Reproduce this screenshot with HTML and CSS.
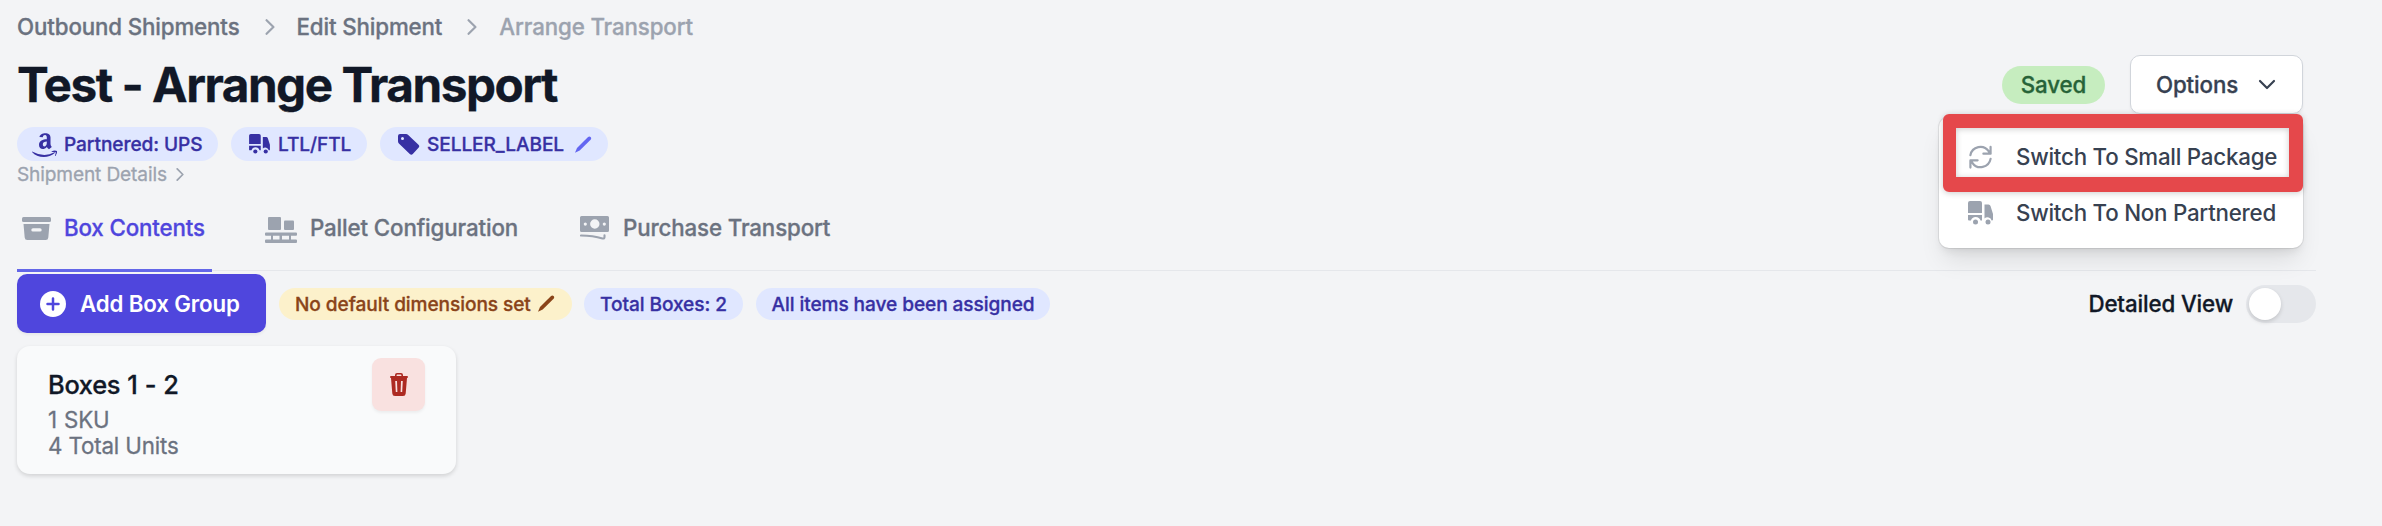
FILE: index.html
```html
<!DOCTYPE html>
<html lang="en">
<head>
    <meta charset="UTF-8">
    <meta name="viewport" content="width=device-width, initial-scale=1.0">
    <title>Arrange Transport</title>
    <link rel="stylesheet" href="styles.css">
</head>
<body>
    <!-- shared icons -->
    <svg class="icon-defs" aria-hidden="true">
        <symbol id="icon-truck" viewBox="0 0 25 24">
            <path d="M2 0h10a2 2 0 0 1 2 2v10H0V2a2 2 0 0 1 2-2z"/>
            <path d="M0 14h14v5.500h-1.500a5 5 0 0 0-9.600 0H1a1 1 0 0 1-1-1z"/>
            <path d="M16.500 3.500h4q1.500 0 2 1.500L25 13v5.500q0 1-1 1h-.4a4.200 4.200 0 0 0-7.100-2z"/>
            <circle cx="7.500" cy="21" r="2.500"/>
            <circle cx="20" cy="21" r="2.500"/>
        </symbol>
        <symbol id="icon-chevron" viewBox="0 0 8 14">
            <path d="M1 1l6 6-6 6" fill="none" stroke="currentColor" stroke-width="1.900" stroke-linecap="round" stroke-linejoin="round"/>
        </symbol>
    </svg>

    <nav class="breadcrumbs">
        <a>Outbound Shipments</a>
        <svg class="crumb-arrow"><use href="#icon-chevron"/></svg>
        <a>Edit Shipment</a>
        <svg class="crumb-arrow"><use href="#icon-chevron"/></svg>
        <a class="current">Arrange Transport</a>
    </nav>

    <header class="header">
        <h1>Test - Arrange Transport</h1>
        <div class="header-actions">
            <span class="saved-badge">Saved</span>
            <div class="dropdown">
                <button class="btn btn-options">
                    <span>Options</span>
                    <svg width="18" height="11" viewBox="0 0 18 11"><path d="M2 2l7 7 7-7" fill="none" stroke="currentColor" stroke-width="2.200" stroke-linecap="round" stroke-linejoin="round"/></svg>
                </button>
                <div class="menu">
                    <a class="menu-item">
                        <svg class="menu-icon" viewBox="0 0 25 25"><path d="M2 10.500A10.500 10.500 0 0 1 21 6.500L23 9M23 2v7h-7.500M23 14.500A10.500 10.500 0 0 1 4 18.500L2 16M2 23.500V16h7.500" fill="none" stroke="currentColor" stroke-width="2.300" stroke-linecap="round" stroke-linejoin="round"/></svg>
                        <span>Switch To Small Package</span>
                    </a>
                    <a class="menu-item">
                        <svg class="menu-icon"><use href="#icon-truck"/></svg>
                        <span>Switch To Non Partnered</span>
                    </a>
                </div>
                <div class="highlight"></div>
            </div>
        </div>
    </header>

    <div class="badges">
        <span class="badge badge-amazon">
            <svg width="26" height="28" viewBox="0 0 26 28">
                <path d="M7.500 7C8 2.500 18.500 1.500 18.500 7.500V14q0 1.500 1.300 3L17 19.300q-1.400-1-2.200-2.300C12 20.300 7 19.500 7 15c0-4.500 4-5.500 7.800-5.700C15 6 14.500 5 13 5c-1.300 0-1.900.8-2.200 2.300zM14.800 11.500c-2.300 0-4 .7-4 3 0 3 4 2.500 4-1.500z" fill-rule="evenodd"/>
                <path d="M0 21.500q12 6.500 22.500.8.800 0 .3.800C16 29 5 28 0 22z"/>
                <path d="M19.500 21.500q3-1.500 5.500-.5.600 2-1.500 5-.7.300-.5-.5.700-2 .8-3.200-1.500-.4-4.100-.2z"/>
            </svg>
            Partnered: UPS
        </span>
        <span class="badge badge-freight">
            <svg width="21" height="20"><use href="#icon-truck"/></svg>
            LTL/FTL
        </span>
        <span class="badge badge-label">
            <svg width="22" height="21" viewBox="0 0 22 21"><path d="M2 0h6q1.300 0 2.200.9l10.300 9.800q1.500 1.500 0 3l-5.700 6.200q-1.500 1.500-3 0L.9 9.500Q0 8.600 0 7.300V2q0-2 2-2zM4.500 3a1.500 1.500 0 1 0 0 3 1.500 1.500 0 0 0 0-3z" fill-rule="evenodd"/></svg>
            SELLER_LABEL
            <svg class="label-edit" width="17" height="17" viewBox="0 0 17 17"><path d="M12.800 1.200q1.600-1.400 2.800-.2 1.200 1.300 0 2.700L4.700 14.600 0 16.700 2 12z"/></svg>
        </span>
    </div>

    <a class="details-link">
        Shipment Details
        <svg width="8" height="13"><use href="#icon-chevron"/></svg>
    </a>

    <div class="tabs">
        <a class="tab active">
            <svg width="29" height="23" viewBox="0 0 29 23"><rect width="29" height="5" rx="1.500"/><path d="M1.500 7h26l-1.200 13.500q-.2 2.500-2.600 2.500H5.300q-2.400 0-2.600-2.500zM11 11.200a1.700 1.700 0 0 0 0 3.400h7a1.700 1.700 0 0 0 0-3.400z" fill-rule="evenodd"/></svg>
            <span>Box Contents</span>
        </a>
        <a class="tab tab-pallet">
            <svg class="pallet-icon" width="32" height="26" viewBox="0 0 32 26"><rect x="3" width="13" height="13" rx="1"/><rect x="19" y="3.500" width="10" height="9.500" rx="1"/><path d="M1 15.500h30q1 0 1 1V18q0 .8-1 .8h-5v3.700h5q1 0 1 1V25q0 1-1 1H1q-1 0-1-1v-1.500q0-1 1-1h5v-3.700H1q-1 0-1-.8v-1.500q0-1 1-1zM8 18.800v3.700h6.500v-3.700zm9 0v3.700h7v-3.700z" fill-rule="evenodd"/></svg>
            <span>Pallet Configuration</span>
        </a>
        <a class="tab">
            <svg width="29" height="24" viewBox="0 0 29 24"><path d="M1.500 0h26Q29 0 29 1.500v13q0 1.500-1.500 1.500h-26Q0 16 0 14.500v-13Q0 0 1.500 0zM14.800 3.300a4.700 4.700 0 1 0 0 9.400 4.700 4.700 0 0 0 0-9.400zM5.300 6.500a1.600 1.600 0 1 0 0 3.200 1.600 1.600 0 0 0 0-3.200zM24.300 6.500a1.600 1.600 0 1 0 0 3.200 1.600 1.600 0 0 0 0-3.200z" fill-rule="evenodd"/><path d="M1 19.500q12 0 21.500 3 2 .4 2-1.500v-1.700" fill="none" stroke="currentColor" stroke-width="2.100" stroke-linecap="round"/></svg>
            <span>Purchase Transport</span>
        </a>
    </div>

    <div class="toolbar">
        <button class="btn btn-primary">
            <svg width="26" height="26" viewBox="0 0 26 26"><circle cx="13" cy="13" r="13"/><path class="plus" d="M13 7.500v11M7.500 13h11"/></svg>
            <span>Add Box Group</span>
        </button>
        <span class="badge badge-warning">
            No default dimensions set
            <svg width="17" height="17" viewBox="0 0 17 17"><path d="M12.800 1.200q1.600-1.400 2.800-.2 1.200 1.300 0 2.700L4.700 14.600 0 16.700 2 12z"/></svg>
        </span>
        <span class="badge badge-total">Total Boxes: 2</span>
        <span class="badge badge-assigned">All items have been assigned</span>
        <div class="view-toggle">
            <span>Detailed View</span>
            <span class="switch"><span class="knob"></span></span>
        </div>
    </div>

    <div class="box-card">
        <div class="box-info">
            <h3>Boxes 1 - 2</h3>
            <p>1 SKU</p>
            <p>4 Total Units</p>
        </div>
        <button class="btn-delete">
            <svg width="18" height="23" viewBox="0 0 18 23"><path d="M5 3V2q0-2 2-2h4q2 0 2 2v1h4q1 0 1 1t-1 1l-1.300 15.500q-.2 2.500-2.700 2.500H5q-2.500 0-2.700-2.500L1 5Q0 5 0 4t1-1zM6.600 3h4.800V2.200q0-.7-.7-.7H7.300q-.7 0-.7.700zM5.200 8l.6 11h1.600L7 8zM11 8l-.4 11h1.600l.6-11z" fill-rule="evenodd"/></svg>
        </button>
    </div>
</body>
</html>
```
FILE: styles.css
```css
:root {
    --indigo: #4f46dd;
    --indigo-dark: #3730a3;
    --indigo-light: #e0e7ff;
    --gray-400: #9ca3af;
    --gray-500: #6b7280;
    --gray-700: #374151;
    --gray-900: #111827;
}

* {
    margin: 0;
    padding: 0;
    box-sizing: border-box;
}

body {
    background-color: #f3f4f6;
    color: var(--gray-900);
    font-family: Inter, "Liberation Sans", sans-serif;
    font-size: 22.3px;
    font-weight: 500;
    line-height: 32px;
    letter-spacing: -0.13px;
    -webkit-text-stroke: 0.3px currentColor;
    padding: 11px 66px 0 17px;
    height: 526px;
    overflow: hidden;
}

svg {
    fill: currentColor;
    flex-shrink: 0;
}

button {
    font: inherit;
    letter-spacing: inherit;
    border: none;
}

.icon-defs {
    display: none;
}

.breadcrumbs {
    display: flex;
    align-items: center;
    height: 32px;
    color: var(--gray-500);
}

.breadcrumbs .current {
    color: var(--gray-400);
}

.crumb-arrow {
    width: 10px;
    height: 16px;
    margin: 0 22px 0 25px;
    color: var(--gray-400);
}

.header {
    display: flex;
    align-items: center;
    justify-content: space-between;
    height: 59px;
    margin-top: 12px;
    padding-right: 13px;
}

.header h1 {
    padding-top: 1px;
    font-size: 47.7px;
    line-height: 58px;
    font-weight: 700;
    letter-spacing: -1.5px;
}

.header-actions {
    display: flex;
    align-items: center;
    gap: 25px;
}

.saved-badge {
    width: 103px;
    height: 38px;
    line-height: 38px;
    border-radius: 19px;
    background: #c6edbf;
    color: #276338;
    text-align: center;
}

.dropdown {
    position: relative;
}

.btn {
    display: flex;
    align-items: center;
    border-radius: 10px;
    box-shadow: 0 2px 3px rgba(0, 0, 0, 0.05);
}

.btn-options {
    gap: 20px;
    width: 173px;
    height: 59px;
    padding-left: 25px;
    border: 1px solid #d1d5db;
    background: white;
    color: var(--gray-700);
}

.menu {
    position: absolute;
    right: 0;
    top: 62px;
    width: 364px;
    height: 131px;
    padding: 12px 0;
    border-radius: 10px;
    background: white;
    box-shadow: 0 0 0 1px rgba(0, 0, 0, 0.07), 0 16px 24px -5px rgba(0, 0, 0, 0.1), 0 6px 10px -4px rgba(0, 0, 0, 0.1);
}

.menu-item {
    display: flex;
    align-items: center;
    gap: 23px;
    height: 56px;
    padding-left: 29px;
    color: var(--gray-700);
    letter-spacing: -0.22px;
    -webkit-text-stroke-width: 0;
    white-space: nowrap;
}

.menu-icon {
    width: 25px;
    height: 24px;
    color: var(--gray-400);
}

.highlight {
    position: absolute;
    right: 0;
    top: 59px;
    width: 360px;
    height: 78px;
    border: solid #e5484b;
    border-width: 14px 14px 15px 13px;
    border-radius: 6px;
    box-shadow: 0 1px 6px rgba(0, 0, 0, 0.2), inset 0 1px 6px rgba(0, 0, 0, 0.2);
}

.badges {
    display: flex;
    gap: 13px;
    margin-top: 13px;
}

.badge {
    display: flex;
    align-items: center;
    height: 34px;
    border-radius: 17px;
    background: var(--indigo-light);
    color: var(--indigo-dark);
    font-size: 19.1px;
    letter-spacing: -0.08px;
    white-space: nowrap;
}

.badge-amazon {
    gap: 6px;
    width: 201px;
    padding-left: 15px;
}

.badge-freight {
    gap: 8px;
    width: 136px;
    padding-left: 18px;
}

.badge-label {
    gap: 7px;
    width: 228px;
    padding-left: 18px;
}

.label-edit {
    margin-left: 4px;
    color: #6366f1;
}

.details-link {
    display: flex;
    align-items: center;
    gap: 9px;
    height: 26px;
    color: var(--gray-400);
    font-size: 19.1px;
    font-weight: 400;
}

.tabs {
    display: flex;
    gap: 53px;
    height: 84px;
    border-bottom: 1px solid #e5e7eb;
}

.tab {
    display: flex;
    align-items: center;
    gap: 13px;
    height: 85px;
    padding-bottom: 3px;
    color: var(--gray-500);
    white-space: nowrap;
}

.tab svg {
    color: var(--gray-400);
}

.tab.active {
    width: 195px;
    padding: 0 0 0 5px;
    border-bottom: 3px solid #6366e8;
    color: var(--indigo);
}

.tab-pallet {
    margin-right: 9px;
}

.pallet-icon {
    margin-top: 4px;
}

.tab-pallet + .tab {
    gap: 14px;
}

.toolbar {
    display: flex;
    align-items: center;
    height: 59px;
    margin-top: 3px;
}

.toolbar .badge {
    height: 32px;
}

.btn-primary {
    gap: 14px;
    width: 249px;
    height: 59px;
    padding-left: 23px;
    margin-right: 13px;
    background: var(--indigo);
    color: white;
    font-weight: 600;
    letter-spacing: -0.15px;
    -webkit-text-stroke-width: 0;
}

.plus {
    fill: none;
    stroke: var(--indigo);
    stroke-width: 2.5;
    stroke-linecap: round;
}

.toolbar .badge-warning {
    gap: 7px;
    width: 293px;
    padding-left: 16px;
    margin-right: 12px;
    background: #fcf1cb;
    color: #8a4419;
}

.badge-total {
    width: 159px;
    justify-content: center;
    margin-right: 13px;
}

.badge-assigned {
    width: 294px;
    justify-content: center;
}

.view-toggle {
    display: flex;
    align-items: center;
    gap: 13px;
    margin-left: auto;
}

.switch {
    width: 70px;
    height: 38px;
    padding: 3px;
    border-radius: 19px;
    background: #e5e7eb;
}

.knob {
    display: block;
    width: 32px;
    height: 32px;
    border-radius: 50%;
    background: white;
    box-shadow: 0 2px 4px rgba(0, 0, 0, 0.15);
}

.box-card {
    display: flex;
    justify-content: space-between;
    width: 439px;
    height: 128px;
    margin-top: 13px;
    padding: 12px 31px 0 31px;
    border-radius: 13px;
    background: #f9fafb;
    box-shadow: 0 2px 4px rgba(0, 0, 0, 0.14);
}

.box-info h3 {
    margin-top: 8px;
    font-size: 25.4px;
    line-height: 38px;
    font-weight: 500;
    letter-spacing: -0.3px;
    word-spacing: 0.7px;
}

.box-info p {
    line-height: 26px;
    font-weight: 400;
    color: var(--gray-500);
}

.box-info h3 + p {
    margin-top: 3px;
    word-spacing: 1px;
}

.btn-delete {
    display: flex;
    align-items: center;
    justify-content: center;
    width: 53px;
    height: 53px;
    border-radius: 9px;
    background: #f9e1e0;
    color: #ad2a22;
    box-shadow: 0 2px 3px rgba(0, 0, 0, 0.05);
}
```
